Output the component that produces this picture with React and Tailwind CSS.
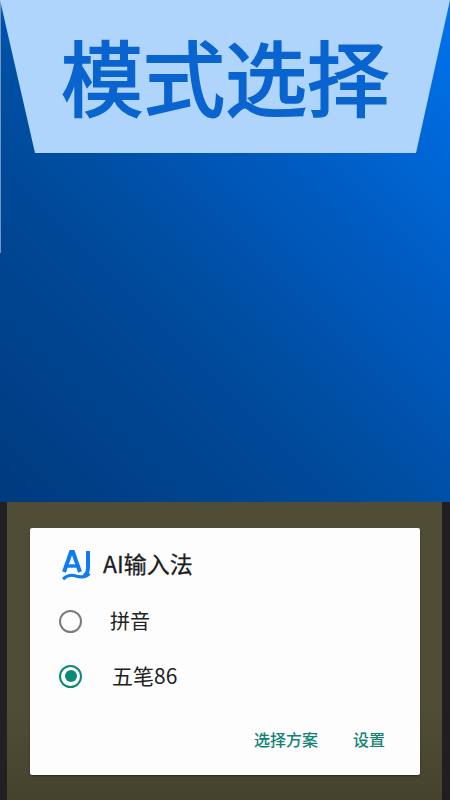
const cjk = { fontFamily: '"Noto Sans CJK SC", "Noto Sans", sans-serif' }

function Logo() {
  return (
    <svg width="30" height="32" viewBox="0 0 30 32" fill="none" className="shrink-0">
      <path d="M2 23 L9 3 L11 3 L18 23" stroke="#0f7cf0" strokeWidth="4" />
      <path d="M5 17 H15" stroke="#0f7cf0" strokeWidth="3.4" />
      <path d="M26 2 V18 C26 22 25.5 25 22 27" stroke="#0f7cf0" strokeWidth="4" />
      <path d="M1 30 C4 27.5 8 25.5 12 26.5 C17 28 23 29.5 27.5 24.5" stroke="#0f7cf0" strokeWidth="3" />
    </svg>
  )
}

function Radio({ checked }) {
  if (checked) {
    return (
      <div className="w-[23px] h-[23px] rounded-full border-[2.5px] border-[#0b8a78] flex items-center justify-center">
        <div className="w-[12px] h-[12px] rounded-full bg-[#0b8a78]" />
      </div>
    )
  }
  return <div className="w-[23px] h-[23px] rounded-full border-[2.5px] border-[#7b7b7b]" />
}

export default function App() {
  return (
    <div className="w-[450px] h-[800px] overflow-hidden flex flex-col" style={cjk}>
      {/* Top banner */}
      <div className="relative h-[502px] bg-[linear-gradient(225deg,#0073ee_0%,#005cc2_32%,#004a9a_62%,#003a7e_100%)]">
        <div className="absolute left-0 top-0 w-px h-[253px] bg-[#6f95c4]" />
        <div className="h-[153px] bg-[#afd5fd] [clip-path:polygon(0_0,100%_0,416px_100%,35px_100%)] flex justify-center">
          <h1 className="text-[82px] leading-[118px] mt-[16px] font-normal [-webkit-text-stroke:2px_#0a64cf] text-[#0a64cf] whitespace-nowrap">模式选择</h1>
        </div>
      </div>

      {/* Dialog over dimmed screen */}
      <div className="h-[298px] flex bg-[#1f1f1f]">
        <div className="w-[7px] bg-[#212121]" />
        <div className="flex-1 bg-[linear-gradient(180deg,#4f4d36_0%,#4f4d36_70%,#45422e_100%)] pl-[23px] pr-[22px] pt-[26px]">
          <div className="w-[390px] h-[247px] rounded-[2px] bg-[#fdfdfd] shadow-[0_1px_2px_rgba(0,0,0,0.4)] flex flex-col">
            <div className="flex items-center h-[32px] mt-[21px] pl-[32px]">
              <Logo />
              <span className="ml-[11px] mt-[-4px] text-[23px] font-normal [-webkit-text-stroke:0.3px_#1d1d1d] text-[#1d1d1d] leading-none">AI输入法</span>
            </div>
            <div className="flex items-center mt-[26px] h-[28px] pl-[29px]">
              <Radio />
              <span className="ml-[28px] text-[20px] text-[#222222]">拼音</span>
            </div>
            <div className="flex items-center mt-[27px] h-[28px] pl-[29px]">
              <Radio checked />
              <span className="ml-[30px] text-[21px] text-[#222222]">五笔86</span>
            </div>
            <div className="flex justify-end mt-[37px] pr-[35px] gap-[35px] text-[16px] font-medium text-[#128373]">
              <span>选择方案</span>
              <span>设置</span>
            </div>
          </div>
        </div>
        <div className="w-[8px] bg-[#1f1f1f]" />
      </div>
    </div>
  )
}
